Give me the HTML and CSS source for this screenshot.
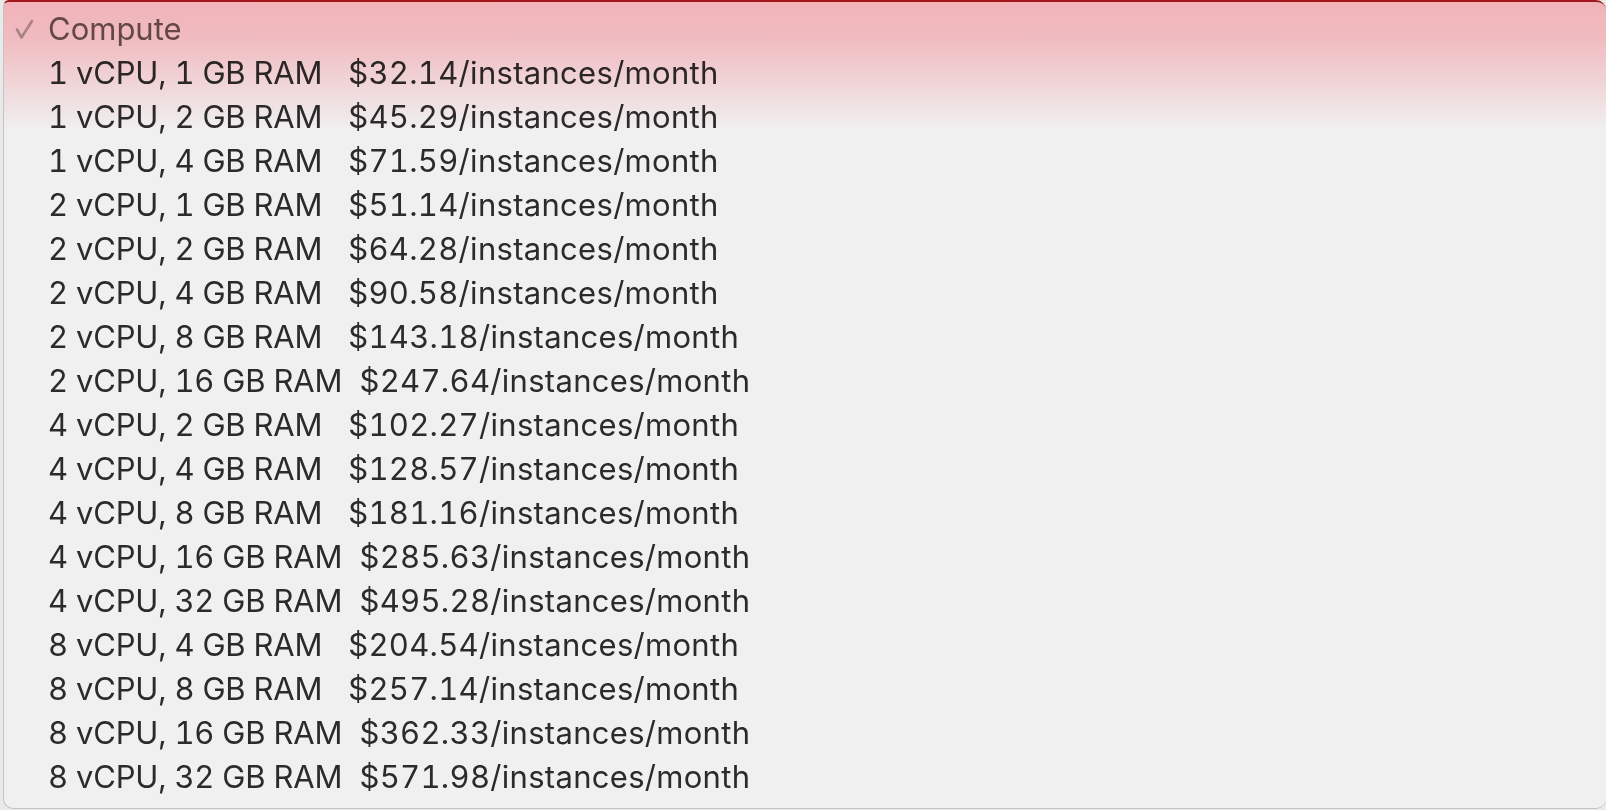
FILE: index.html
```html
<!DOCTYPE html>
<html>
<head>
<meta charset="utf-8">
<link rel="stylesheet" href="styles.css">
</head>
<body>
<div class="menu">
  <div class="row header"><span class="check"><svg width="20" height="22" viewBox="0 0 20 22"><path d="M2 11.5 L6.5 19.5 L17 3" fill="none" stroke="#a8a8a8" stroke-width="2.6" stroke-linecap="round" stroke-linejoin="round"/></svg></span><span class="title">Compute</span></div>
  <div class="row"><span class="spec">1 vCPU, 1 GB RAM</span>   $32.14/instances/month</div>
  <div class="row"><span class="spec">1 vCPU, 2 GB RAM</span>   $45.29/instances/month</div>
  <div class="row"><span class="spec">1 vCPU, 4 GB RAM</span>   $71.59/instances/month</div>
  <div class="row"><span class="spec">2 vCPU, 1 GB RAM</span>   $51.14/instances/month</div>
  <div class="row"><span class="spec">2 vCPU, 2 GB RAM</span>   $64.28/instances/month</div>
  <div class="row"><span class="spec">2 vCPU, 4 GB RAM</span>   $90.58/instances/month</div>
  <div class="row"><span class="spec">2 vCPU, 8 GB RAM</span>   $143.18/instances/month</div>
  <div class="row"><span class="spec">2 vCPU, 16 GB RAM</span>  $247.64/instances/month</div>
  <div class="row"><span class="spec">4 vCPU, 2 GB RAM</span>   $102.27/instances/month</div>
  <div class="row"><span class="spec">4 vCPU, 4 GB RAM</span>   $128.57/instances/month</div>
  <div class="row"><span class="spec">4 vCPU, 8 GB RAM</span>   $181.16/instances/month</div>
  <div class="row"><span class="spec">4 vCPU, 16 GB RAM</span>  $285.63/instances/month</div>
  <div class="row"><span class="spec">4 vCPU, 32 GB RAM</span>  $495.28/instances/month</div>
  <div class="row"><span class="spec">8 vCPU, 4 GB RAM</span>   $204.54/instances/month</div>
  <div class="row"><span class="spec">8 vCPU, 8 GB RAM</span>   $257.14/instances/month</div>
  <div class="row"><span class="spec">8 vCPU, 16 GB RAM</span>  $362.33/instances/month</div>
  <div class="row"><span class="spec">8 vCPU, 32 GB RAM</span>  $571.98/instances/month</div>
  <div class="tint"></div>
</div>
</body>
</html>
```
FILE: styles.css
```css
html, body {
  margin: 0;
  padding: 0;
  background: #e9e9e9;
  width: 1606px;
  height: 810px;
  overflow: hidden;
}
.menu {
  position: relative;
  margin-left: 3px;
  height: 809px;
  background: #f0f0f0;
  border-top: 2px solid #a3161c;
  border-left: 1px solid #c4c4c4;
  border-bottom: 1px solid #c4c4c4;
  border-radius: 6px 10px 10px 10px;
  padding-top: 5px;
  box-sizing: border-box;
  overflow: hidden;
  font-family: Inter, "Noto Sans", sans-serif;
  font-size: 31px;
  letter-spacing: 0.3px;
  font-variant-numeric: tabular-nums;
  color: #2b2b2b;
}
.row {
  height: 44px;
  line-height: 44px;
  padding-left: 44px;
  white-space: pre;
}
.spec {
  letter-spacing: -0.2px;
}
.header {
  display: flex;
  align-items: center;
  padding-left: 11px;
}
.check {
  width: 33px;
  height: 22px;
  display: flex;
}
.title {
  color: #645b5b;
  letter-spacing: 0;
}
.tint {
  position: absolute;
  left: 0;
  top: 0;
  right: 0;
  height: 128px;
  background: linear-gradient(to bottom, rgb(255,191,196) 0%, rgb(255,200,205) 30%, rgb(255,232,234) 70%, rgb(255,255,255) 100%);
  mix-blend-mode: multiply;
  pointer-events: none;
}
```
